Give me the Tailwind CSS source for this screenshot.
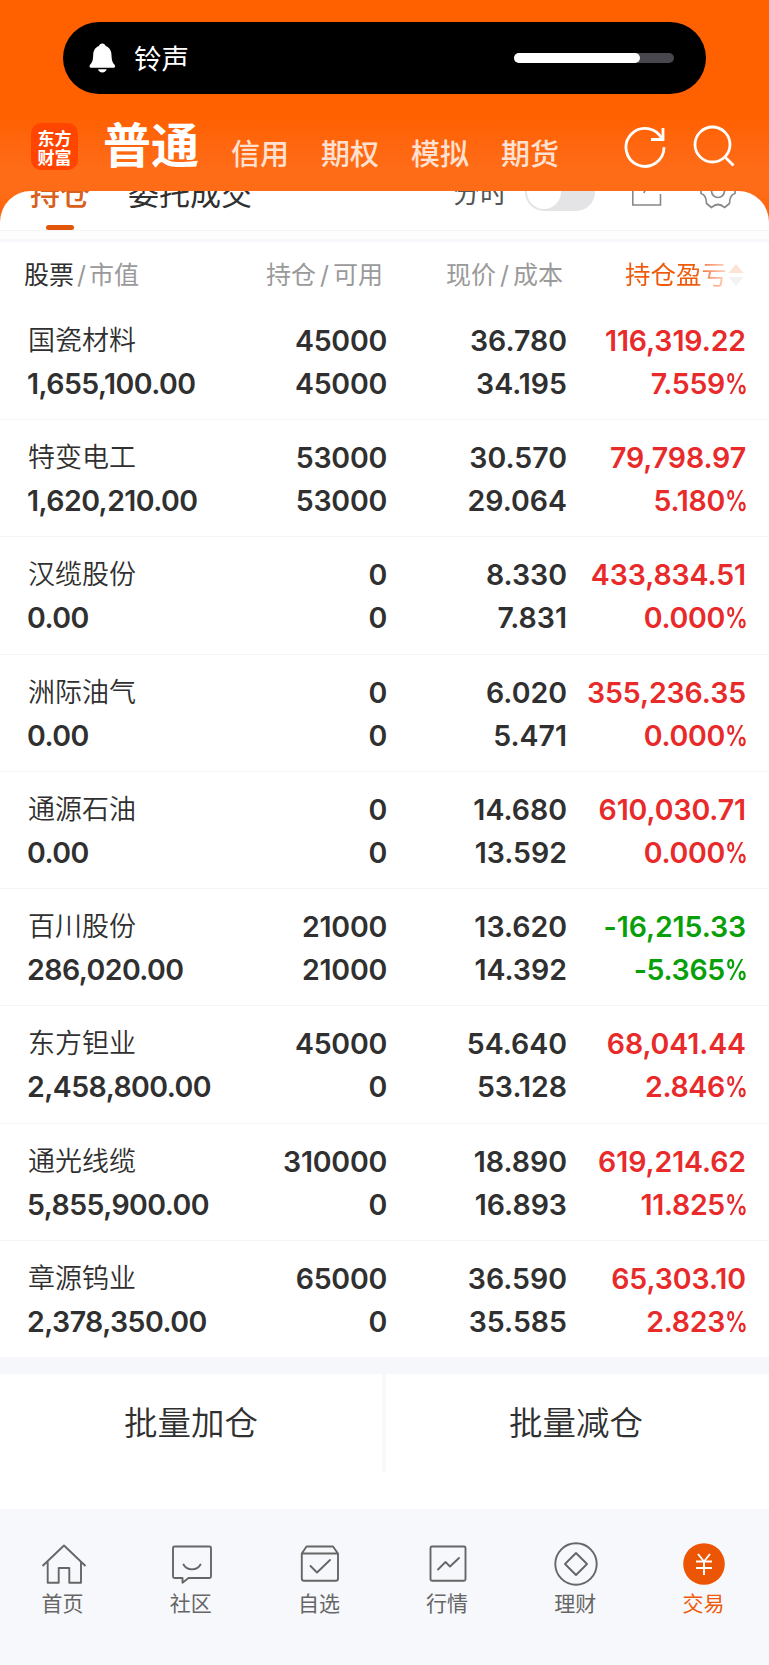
<!DOCTYPE html>
<html lang="zh-CN">
<head>
<meta charset="utf-8">
<title>持仓</title>
<script src="https://cdn.jsdelivr.net/npm/@tailwindcss/browser@4"></script>
</head>
<body class="w-[769px] h-[1665px] overflow-hidden bg-white font-['Inter','Noto_Sans_CJK_SC',sans-serif] text-[#303030]">
<div class="flex flex-col w-[769px] h-[1665px]">

  <header class="h-[191px] shrink-0 bg-linear-to-b from-[#ff6000] from-60% to-[#ff6c18] to-90% pt-[22px]">
    <div class="ml-[63px] w-[643px] h-[72px] rounded-full bg-black flex items-center pl-[26px] pr-[32px]">
      <svg class="w-[27px] h-[30px]" viewBox="0 0 27 30" fill="#fff"><path d="M13.3 0.5C15 .5 16.2 1.5 16.6 3C20.6 4.4 22.4 7.700 22.500 12C22.700 17.500 23.500 19.500 25.400 21.500C26.700 23 26.200 24.700 24.500 24.700H2.200C.4 24.700 0 23 1.200 21.500C3.200 19.500 4 17.500 4.200 12C4.300 7.700 6 4.400 10 3C10.400 1.500 11.600 .5 13.300 .5ZM9 26.200H17.700C17.200 28.200 15.500 29.400 13.300 29.400C11.200 29.400 9.500 28.200 9 26.200Z"/></svg>
      <span class="ml-[18px] pt-[2px] text-[27.5px] leading-[40px] text-white">铃声</span>
      <div class="ml-auto w-[160px] h-[10px] rounded-full bg-[#48474d]"><div class="w-[126px] h-[10px] rounded-full bg-white"></div></div>
    </div>
    <nav class="flex items-start h-[97px] pl-[31px] text-white">
      <div class="mt-[29px] w-[47px] h-[47px] rounded-[10px] bg-[#ff4500] flex flex-col items-center justify-center font-['Noto_Sans_CJK_SC',sans-serif] font-bold text-[17px] leading-[19px]"><span class="h-[19px]">东方</span><span class="h-[19px]">财富</span></div>
      <span class="ml-[25px] mt-[23px] text-[48px] leading-[58px] font-bold">普通</span>
      <div class="flex gap-[32px] ml-[32px] mt-[41px] text-[29px] leading-[40px] font-medium text-[#ffe1d1]"><span>信用</span><span>期权</span><span>模拟</span><span>期货</span></div>
      <svg class="ml-[64px] mt-[31px] w-[44px] h-[44px]" viewBox="0 0 44 44" fill="none" stroke="#fff" stroke-width="2.800"><path d="M41 22.300A19 19 0 1 1 39.300 14.500M40 3V14.500H28"/></svg>
      <svg class="ml-[25px] mt-[31px] w-[44px] h-[44px]" viewBox="0 0 44 44" fill="none" stroke="#fff" stroke-width="2.800"><circle cx="20.500" cy="19.500" r="17.500"/><path d="M32.800 31.800L41.500 40.500"/></svg>
    </nav>
  </header>

  <div class="h-[40px] shrink-0 bg-linear-to-b from-[#ff6c18] to-[#ff6000] to-80%">
    <div class="h-[40px] bg-white rounded-t-[31px] overflow-hidden border-b border-[#f4f4f6]">
      <div class="flex items-start h-[60px] -mt-[18px] pl-[30px] leading-[42px]">
        <div class="flex flex-col items-center font-medium text-[30px] text-[#d9601c]"><span class="h-[52px]">持仓</span><i class="w-[28px] h-[5px] rounded-full bg-[#e2560c]"></i></div>
        <span class="ml-[38px] text-[31px]">委托成交</span>
        <span class="ml-[201px] text-[27px] text-[#555]">分时</span>
        <div class="ml-[18px] w-[70px] h-[38px] rounded-full bg-[#e4e4e6] p-[2px]"><div class="w-[34px] h-[34px] rounded-full bg-white"></div></div>
        <svg class="ml-[36px] w-[32px] h-[34px]" viewBox="0 0 32 34" fill="none" stroke="#888" stroke-width="1.600"><path d="M12 5H1.800V32H29.500V21M13 20C14 16 18 12 29 8"/></svg>
        <svg class="ml-[36px] w-[38px] h-[38px]" viewBox="0 0 38 38" fill="none" stroke="#888" stroke-width="1.700"><circle cx="19" cy="18" r="6.500"/><path d="M13.500 1.500Q19 5.500 24.500 1.500L30 4.500Q30 11 36 13.500V20.500Q30.500 22 30.500 30.500L25.500 34.500Q19 28.500 12.500 34.500L7.500 30.500Q7.500 22 2 20.500V13.500Q8 11 8 4.500Z" stroke-linejoin="round"/></svg>
      </div>
    </div>
  </div>
  <div class="h-[11px] shrink-0 bg-[#fdfdfe] border-b-[3px] border-[#f6f7fa]"></div>

  <div class="h-[61px] shrink-0 flex pt-[13px] text-[25px] leading-[40px] text-[#9a9a9a]">
    <div class="w-[242px] pl-[24px]"><span class="text-[#303030]">股票</span><span class="mx-[3px] inline-block">/</span>市值</div>
    <div class="w-[141px] text-right">持仓<span class="mx-[4px] inline-block">/</span>可用</div>
    <div class="w-[180px] text-right">现价<span class="mx-[4px] inline-block">/</span>成本</div>
    <div class="flex items-center ml-[62px] h-[40px] text-[25.500px]"><span class="bg-linear-to-r from-[#ee5a0a] from-70% to-[#fbd9c6] bg-clip-text text-transparent">持仓盈亏</span>
      <svg class="w-[16px] h-[22px] ml-[1px]" viewBox="0 0 16 22"><path d="M8 0L15.500 9H.5Z" fill="#fde3d5"/><path d="M8 22L15.500 13H.5Z" fill="#f3f3f3"/></svg></div>
  </div>

  <main id="rows" class="shrink-0 h-[1054px] flex flex-col"></main>

  <div class="h-[17px] shrink-0 bg-[#f5f7fa]"></div>
  <div class="h-[135px] shrink-0 flex items-start text-[33.500px] leading-[98px] text-center font-[350]">
    <div class="w-[382px] h-[98px]">批量加仓</div><div class="w-[4px] h-[98px] bg-[#f8f9fb]"></div><div class="w-[383px] h-[98px] pr-[3px]">批量减仓</div>
  </div>

  <footer class="flex-1 bg-[#f7f8fb] pt-[32px] grid grid-cols-6 text-[21px] leading-[34px] text-[#666] text-center">
    <div class="flex flex-col items-center pr-[1px]"><svg class="w-[46px] h-[46px]" viewBox="0 0 46 46" fill="none" stroke="#666" stroke-width="1.900" stroke-linejoin="round"><path d="M1.500 25L23 4.500L44.500 25M6.700 21V41.800H17.700V27H28.300V41.800H40V21"/></svg><span class="pr-[2px]">首页</span></div>
    <div class="flex flex-col items-center pr-[1px]"><svg class="w-[46px] h-[46px]" viewBox="0 0 46 46" fill="none" stroke="#666" stroke-width="1.900" stroke-linejoin="round"><path d="M5.500 5.500H40.500Q42 5.500 42 7V35.500Q42 37 40.500 37H19.500L13.500 41.700V37H5.500Q4 37 4 35.500V7Q4 5.500 5.500 5.500Z"/><path d="M14.500 23.500C18 30 28 30 31.500 23.500" stroke-linecap="round"/></svg><span class="pr-[2px]">社区</span></div>
    <div class="flex flex-col items-center pr-[1px]"><svg class="w-[46px] h-[46px]" viewBox="0 0 46 46" fill="none" stroke="#666" stroke-width="1.900" stroke-linejoin="round"><path d="M4.800 12.500L9.500 5.500H36L41 12.500V37.500Q41 39.800 38.700 39.800H7Q4.800 39.800 4.800 37.500ZM4.800 12.500H41"/><path d="M13.500 25L20 31.500L33 19" stroke-linecap="round"/></svg><span class="pr-[2px]">自选</span></div>
    <div class="flex flex-col items-center pr-[1px]"><svg class="w-[46px] h-[46px]" viewBox="0 0 46 46" fill="none" stroke="#666" stroke-width="1.900" stroke-linejoin="round"><rect x="5.500" y="5.500" width="35" height="34.300" rx="1.500"/><path d="M13 28.500L20.500 21L25 25.500L34 17" stroke-linecap="round"/></svg><span class="pr-[2px]">行情</span></div>
    <div class="flex flex-col items-center pr-[1px]"><svg class="w-[46px] h-[46px]" viewBox="0 0 46 46" fill="none" stroke="#666" stroke-width="1.900" stroke-linejoin="round"><circle cx="23" cy="23" r="20.700"/><path d="M23 12L34 23L23 34L12 23Z"/></svg><span class="pr-[2px]">理财</span></div>
    <div class="flex flex-col items-center pr-[1px] text-[#ee5a0a]"><svg class="w-[46px] h-[46px]" viewBox="0 0 46 46" fill="none" stroke="#fff" stroke-width="1.900"><circle cx="23" cy="23" r="20.800" fill="#ec5504" stroke="none"/><path d="M17 13L23 20.500L29 13M23 20.500V34M15 20.500H31M15 27H31"/></svg><span class="pr-[2px]">交易</span></div>
  </footer>
</div>
<script>
const data = [
["国瓷材料","1,655,100.00","45000","45000","36.780","34.195","116,319.22","7.559%"],
["特变电工","1,620,210.00","53000","53000","30.570","29.064","79,798.97","5.180%"],
["汉缆股份","0.00","0","0","8.330","7.831","433,834.51","0.000%"],
["洲际油气","0.00","0","0","6.020","5.471","355,236.35","0.000%"],
["通源石油","0.00","0","0","14.680","13.592","610,030.71","0.000%"],
["百川股份","286,020.00","21000","21000","13.620","14.392","-16,215.33","-5.365%"],
["东方钽业","2,458,800.00","45000","0","54.640","53.128","68,041.44","2.846%"],
["通光线缆","5,855,900.00","310000","0","18.890","16.893","619,214.62","11.825%"],
["章源钨业","2,378,350.00","65000","0","36.590","35.585","65,303.10","2.823%"]];
document.getElementById('rows').innerHTML = data.map((r, i) => `
<div class="flex-1 flex pt-[16px] pl-[27px] text-[28.5px] leading-[43px] font-semibold ${i < 8 ? 'border-b border-[#f4f4f6]' : ''}">
  <div class="w-[215px]"><div class="text-[27px] h-[43px] pl-[1px] font-[350]">${r[0]}</div><div class="tracking-[-0.55px]">${r[1]}</div></div>
  <div class="w-[145px] text-right tracking-[-0.25px]"><div>${r[2]}</div><div>${r[3]}</div></div>
  <div class="w-[180px] text-right"><div>${r[4]}</div><div>${r[5]}</div></div>
  <div class="w-[179px] text-right tracking-[-0.1px] ${r[6][0] === '-' ? 'text-[#08a008]' : 'text-[#e92a2a]'}"><div>${r[6]}</div><div class="tracking-[-0.3px]">${r[7].slice(0, -1)}<span class="inline-block w-[21px] origin-left scale-x-[0.8]">%</span></div></div>
</div>`).join('');
</script>
</body>
</html>
